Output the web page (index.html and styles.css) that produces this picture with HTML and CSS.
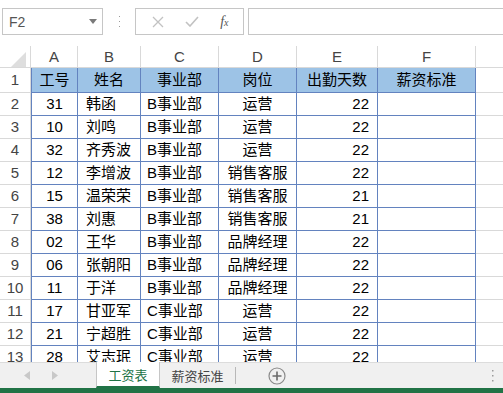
FILE: index.html
```html
<!DOCTYPE html>
<html lang="zh-CN">
<head>
    <meta charset="UTF-8">
    <title>工资表</title>
    <link rel="stylesheet" href="styles.css">
</head>
<body>
    <div class="formula-bar">
        <div class="name-box">
            <span>F2</span>
            <svg class="drop" width="8" height="5" viewBox="0 0 8 5"><polygon points="0,0 8,0 4,5" fill="#7a7a7a"/></svg>
        </div>
        <div class="grip">
            <svg width="3" height="13" viewBox="0 0 3 13"><rect x="1" y="1" width="1" height="1" fill="#9a9a9a"/><rect x="1" y="6" width="1" height="1" fill="#9a9a9a"/><rect x="1" y="11" width="1" height="1" fill="#9a9a9a"/></svg>
        </div>
        <div class="fx-box">
            <svg width="12" height="12" viewBox="0 0 12 12"><path d="M1 1 L11 11 M11 1 L1 11" stroke="#c2c2c2" stroke-width="1.3" fill="none"/></svg>
            <svg width="14" height="11" viewBox="0 0 14 11"><path d="M1 6 L5 10 L13 1" stroke="#c2c2c2" stroke-width="1.6" fill="none"/></svg>
            <span class="fx">f<small>x</small></span>
        </div>
        <div class="formula-input"></div>
    </div>

    <div class="sheet">
        <table class="grid">
            <colgroup>
                <col style="width:31px"><col style="width:47px"><col style="width:63px"><col style="width:78px">
                <col style="width:78px"><col style="width:81px"><col style="width:98px"><col style="width:27px">
            </colgroup>
            <tr class="col-head">
                <th class="corner"><svg width="15" height="15" viewBox="0 0 15 15"><polygon points="15,0 15,15 0,15" fill="#dedede"/></svg></th>
                <th>A</th><th>B</th><th>C</th><th>D</th><th>E</th><th>F</th><th class="blank"></th>
            </tr>
            <tr class="title">
                <td class="rn">1</td><td class="c first">工号</td><td class="c">姓名</td><td class="c">事业部</td><td class="c">岗位</td><td class="c">出勤天数</td><td class="c">薪资标准</td><td class="g"></td>
            </tr>
            <tr><td class="rn">2</td><td class="c first">31</td><td class="l">韩函</td><td class="d">B事业部</td><td class="c">运营</td><td class="r">22</td><td></td><td class="g"></td></tr>
            <tr><td class="rn">3</td><td class="c first">10</td><td class="l">刘鸣</td><td class="d">B事业部</td><td class="c">运营</td><td class="r">22</td><td></td><td class="g"></td></tr>
            <tr><td class="rn">4</td><td class="c first">32</td><td class="l">齐秀波</td><td class="d">B事业部</td><td class="c">运营</td><td class="r">22</td><td></td><td class="g"></td></tr>
            <tr><td class="rn">5</td><td class="c first">12</td><td class="l">李增波</td><td class="d">B事业部</td><td class="c">销售客服</td><td class="r">22</td><td></td><td class="g"></td></tr>
            <tr><td class="rn">6</td><td class="c first">15</td><td class="l">温荣荣</td><td class="d">B事业部</td><td class="c">销售客服</td><td class="r">21</td><td></td><td class="g"></td></tr>
            <tr><td class="rn">7</td><td class="c first">38</td><td class="l">刘惠</td><td class="d">B事业部</td><td class="c">销售客服</td><td class="r">21</td><td></td><td class="g"></td></tr>
            <tr><td class="rn">8</td><td class="c first">02</td><td class="l">王华</td><td class="d">B事业部</td><td class="c">品牌经理</td><td class="r">22</td><td></td><td class="g"></td></tr>
            <tr><td class="rn">9</td><td class="c first">06</td><td class="l">张朝阳</td><td class="d">B事业部</td><td class="c">品牌经理</td><td class="r">22</td><td></td><td class="g"></td></tr>
            <tr><td class="rn">10</td><td class="c first">11</td><td class="l">于洋</td><td class="d">B事业部</td><td class="c">品牌经理</td><td class="r">22</td><td></td><td class="g"></td></tr>
            <tr><td class="rn">11</td><td class="c first">17</td><td class="l">甘亚军</td><td class="d">C事业部</td><td class="c">运营</td><td class="r">22</td><td></td><td class="g"></td></tr>
            <tr><td class="rn">12</td><td class="c first">21</td><td class="l">宁超胜</td><td class="d">C事业部</td><td class="c">运营</td><td class="r">22</td><td></td><td class="g"></td></tr>
            <tr><td class="rn">13</td><td class="c first">28</td><td class="l">艾志珉</td><td class="d">C事业部</td><td class="c">运营</td><td class="r">22</td><td></td><td class="g"></td></tr>
        </table>
    </div>

    <div class="tab-bar">
        <div class="nav">
            <svg width="6" height="9" viewBox="0 0 6 9"><polygon points="6,0 6,9 0,4.5" fill="#c8c8c8"/></svg>
            <svg width="6" height="9" viewBox="0 0 6 9"><polygon points="0,0 0,9 6,4.5" fill="#c8c8c8"/></svg>
        </div>
        <div class="tab active">工资表</div>
        <div class="tab">薪资标准</div>
        <div class="add">
            <svg width="18" height="18" viewBox="0 0 18 18"><circle cx="9" cy="9" r="8" stroke="#8a8a8a" stroke-width="1.2" fill="none"/><path d="M9 4.5 V13.5 M4.5 9 H13.5" stroke="#6a6a6a" stroke-width="1.6"/></svg>
        </div>
        <div class="more">
            <svg width="3" height="13" viewBox="0 0 3 13"><rect x="1" y="1" width="1.5" height="1.5" fill="#9a9a9a"/><rect x="1" y="6" width="1.5" height="1.5" fill="#9a9a9a"/><rect x="1" y="11" width="1.5" height="1.5" fill="#9a9a9a"/></svg>
        </div>
    </div>
    <div class="status"></div>
</body>
</html>
```

FILE: styles.css
```css
:root {
    --grid-line: #d9d9d9;
    --table-line: #6383bf;
    --title-fill: #9dc3e6;
    --excel-green: #217346;
    --box-line: #c6c6c6;
}

body {
    margin: 0;
    width: 503px;
    height: 393px;
    overflow: hidden;
    display: flex;
    flex-direction: column;
    background: #fff;
    font-family: 'Liberation Sans', 'Noto Sans CJK SC', sans-serif;
    color: #000;
}

/* formula bar */
.formula-bar {
    height: 46px;
    box-sizing: border-box;
    padding: 8px 0 0 2px;
    display: flex;
    align-items: flex-start;
    flex-shrink: 0;
}

.name-box {
    width: 101px;
    height: 27px;
    box-sizing: border-box;
    border: 1px solid var(--box-line);
    display: flex;
    align-items: center;
    justify-content: space-between;
    padding: 0 5px 0 6px;
    font-size: 14px;
    color: #555;
}

.grip {
    width: 32px;
    height: 27px;
    display: flex;
    align-items: center;
    justify-content: center;
}

.fx-box {
    width: 109px;
    height: 27px;
    box-sizing: border-box;
    border: 1px solid var(--box-line);
    display: flex;
    align-items: center;
    justify-content: space-around;
    padding: 0 4px 0 6px;
}

.fx {
    font-family: 'Liberation Serif', serif;
    font-style: italic;
    font-size: 14px;
    color: #555;
}

.fx small {
    font-size: 10px;
}

.formula-input {
    flex: 1;
    height: 27px;
    box-sizing: border-box;
    margin-left: 4px;
    border: 1px solid var(--box-line);
    border-right: none;
}

/* sheet */
.sheet {
    flex: 1;
    overflow: hidden;
}

.grid {
    table-layout: fixed;
    width: 503px;
    border-collapse: separate;
    border-spacing: 0;
    font-size: 15px;
}

.grid th,
.grid td {
    padding: 0;
    white-space: nowrap;
    overflow: hidden;
}

.col-head th {
    height: 21px;
    line-height: 21px;
    font-weight: normal;
    color: #444;
    border-right: 1px solid var(--grid-line);
    border-bottom: 1px solid var(--grid-line);
}

.col-head th.corner {
    vertical-align: bottom;
    text-align: right;
    padding-right: 4px;
    line-height: 0;
}

.col-head th.blank {
    border-right: none;
}

.grid td {
    height: 22px;
    line-height: 22px;
    border-right: 1px solid var(--table-line);
    border-bottom: 1px solid var(--table-line);
}

.grid tr.title td {
    height: 24px;
    line-height: 24px;
}

.grid td.rn {
    text-align: center;
    color: #444;
    border-bottom-color: var(--grid-line);
    border-right-color: var(--grid-line);
}

.grid td.g {
    border-right: none;
    border-bottom-color: var(--grid-line);
}

.grid td.first {
    border-left: 1px solid var(--table-line);
}

.title td {
    background: var(--title-fill);
}

.title td.rn,
.title td.g {
    background: #fff;
}

.c { text-align: center; }
.l { padding-left: 8px !important; }
.d { padding-left: 6px !important; }
.r { text-align: right; padding-right: 8px !important; }

/* sheet tabs */
.tab-bar {
    height: 26px;
    flex-shrink: 0;
    background: #f0f0f0;
    border-top: 1px solid #dcdcdc;
    box-sizing: border-box;
    display: flex;
    align-items: stretch;
    font-size: 13px;
}

.nav {
    width: 96px;
    display: flex;
    align-items: center;
    gap: 22px;
    padding-left: 24px;
    box-sizing: border-box;
}

.tab {
    display: flex;
    align-items: center;
    justify-content: center;
    color: #444;
}

.tab.active {
    width: 64px;
    margin-top: -1px;
    background: #fff;
    color: var(--excel-green);
    border-left: 1px solid var(--box-line);
    border-right: 1px solid var(--box-line);
    border-bottom: 2px solid var(--excel-green);
    box-sizing: border-box;
}

.tab:not(.active) {
    width: 75px;
    margin: 4px 0;
    border-right: 1px solid #b8b8b8;
}

.add {
    width: 82px;
    display: flex;
    align-items: center;
    justify-content: center;
}

.more {
    margin-left: auto;
    width: 12px;
    display: flex;
    align-items: center;
}

.status {
    height: 5px;
    flex-shrink: 0;
    background: var(--excel-green);
}
```
